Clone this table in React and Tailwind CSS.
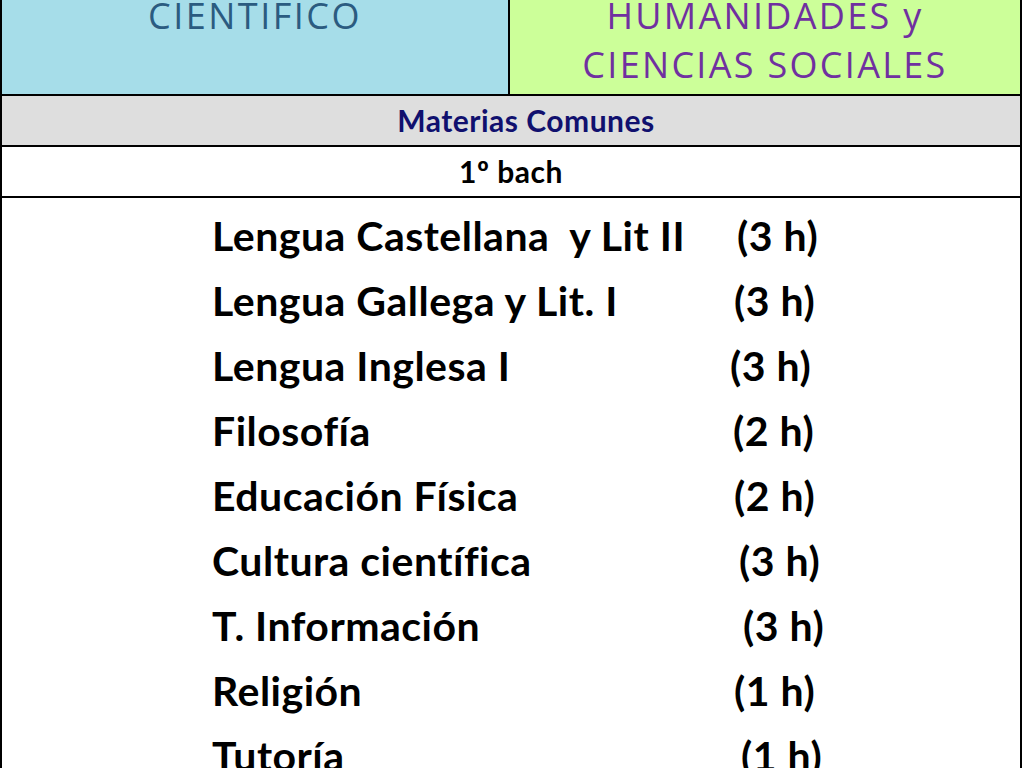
import React from 'react';

const materias = [
  { name: 'Lengua Castellana\u00a0 y Lit II', hours: '(3 h)', w: 'w-[525px]' },
  { name: 'Lengua Gallega y Lit. I', hours: '(3 h)', w: 'w-[522px]' },
  { name: 'Lengua Inglesa I', hours: '(3 h)', w: 'w-[518px]' },
  { name: 'Filosofía', hours: '(2 h)', w: 'w-[521px]' },
  { name: 'Educación Física', hours: '(2 h)', w: 'w-[522px]' },
  { name: 'Cultura científica', hours: '(3 h)', w: 'w-[527px]' },
  { name: 'T. Información', hours: '(3 h)', w: 'w-[531px]' },
  { name: 'Religión', hours: '(1 h)', w: 'w-[522px]' },
  { name: 'Tutoría', hours: '(1 h)', w: 'w-[529px]' },
];

export default function App() {
  return (
    <div className="w-[1024px] h-[768px] overflow-hidden bg-white font-['Lato','Liberation_Sans',sans-serif]">
      <div className="w-[1022px] h-full border-x-2 border-black flex flex-col">
        {/* cabecera de modalidades */}
        <div className="h-[96px] flex border-b-2 border-black shrink-0">
          <div className="w-[508px] bg-[#a6dde9] border-r-2 border-black overflow-hidden flex justify-center">
            <span className="mt-[-9px] text-[36px] leading-[49px] text-[#2b5b80] tracking-[2.5px] font-['Open_Sans',sans-serif]">
              CIENTIFICO
            </span>
          </div>
          <div className="flex-1 bg-[#ccff99] overflow-hidden flex flex-col items-center">
            <span className="mt-[-9px] text-[36px] leading-[49px] text-[#7030a0] tracking-[2.3px] font-['Open_Sans',sans-serif]">
              HUMANIDADES y
            </span>
            <span className="text-[36px] leading-[49px] text-[#7030a0] tracking-[2.3px] font-['Open_Sans',sans-serif]">
              CIENCIAS SOCIALES
            </span>
          </div>
        </div>

        <div className="h-[51px] bg-[#dedede] border-b-2 border-black flex items-center justify-center pl-[30px] shrink-0">
          <span className="text-[30px] tracking-[0.5px] font-bold text-[#10106e]">Materias Comunes</span>
        </div>

        <div className="h-[51px] border-b-2 border-black flex items-center justify-center shrink-0">
          <span className="text-[30px] tracking-[0.5px] font-bold text-black">1º bach</span>
        </div>

        <div className="pl-[210px] pt-[5px]">
          {materias.map((m) => (
            <div key={m.name} className="h-[65px] flex items-center text-[41px] tracking-[0.5px] font-bold text-black whitespace-pre">
              <span className={m.w}>{m.name}</span>
              <span>{m.hours}</span>
            </div>
          ))}
        </div>
      </div>
    </div>
  );
}
